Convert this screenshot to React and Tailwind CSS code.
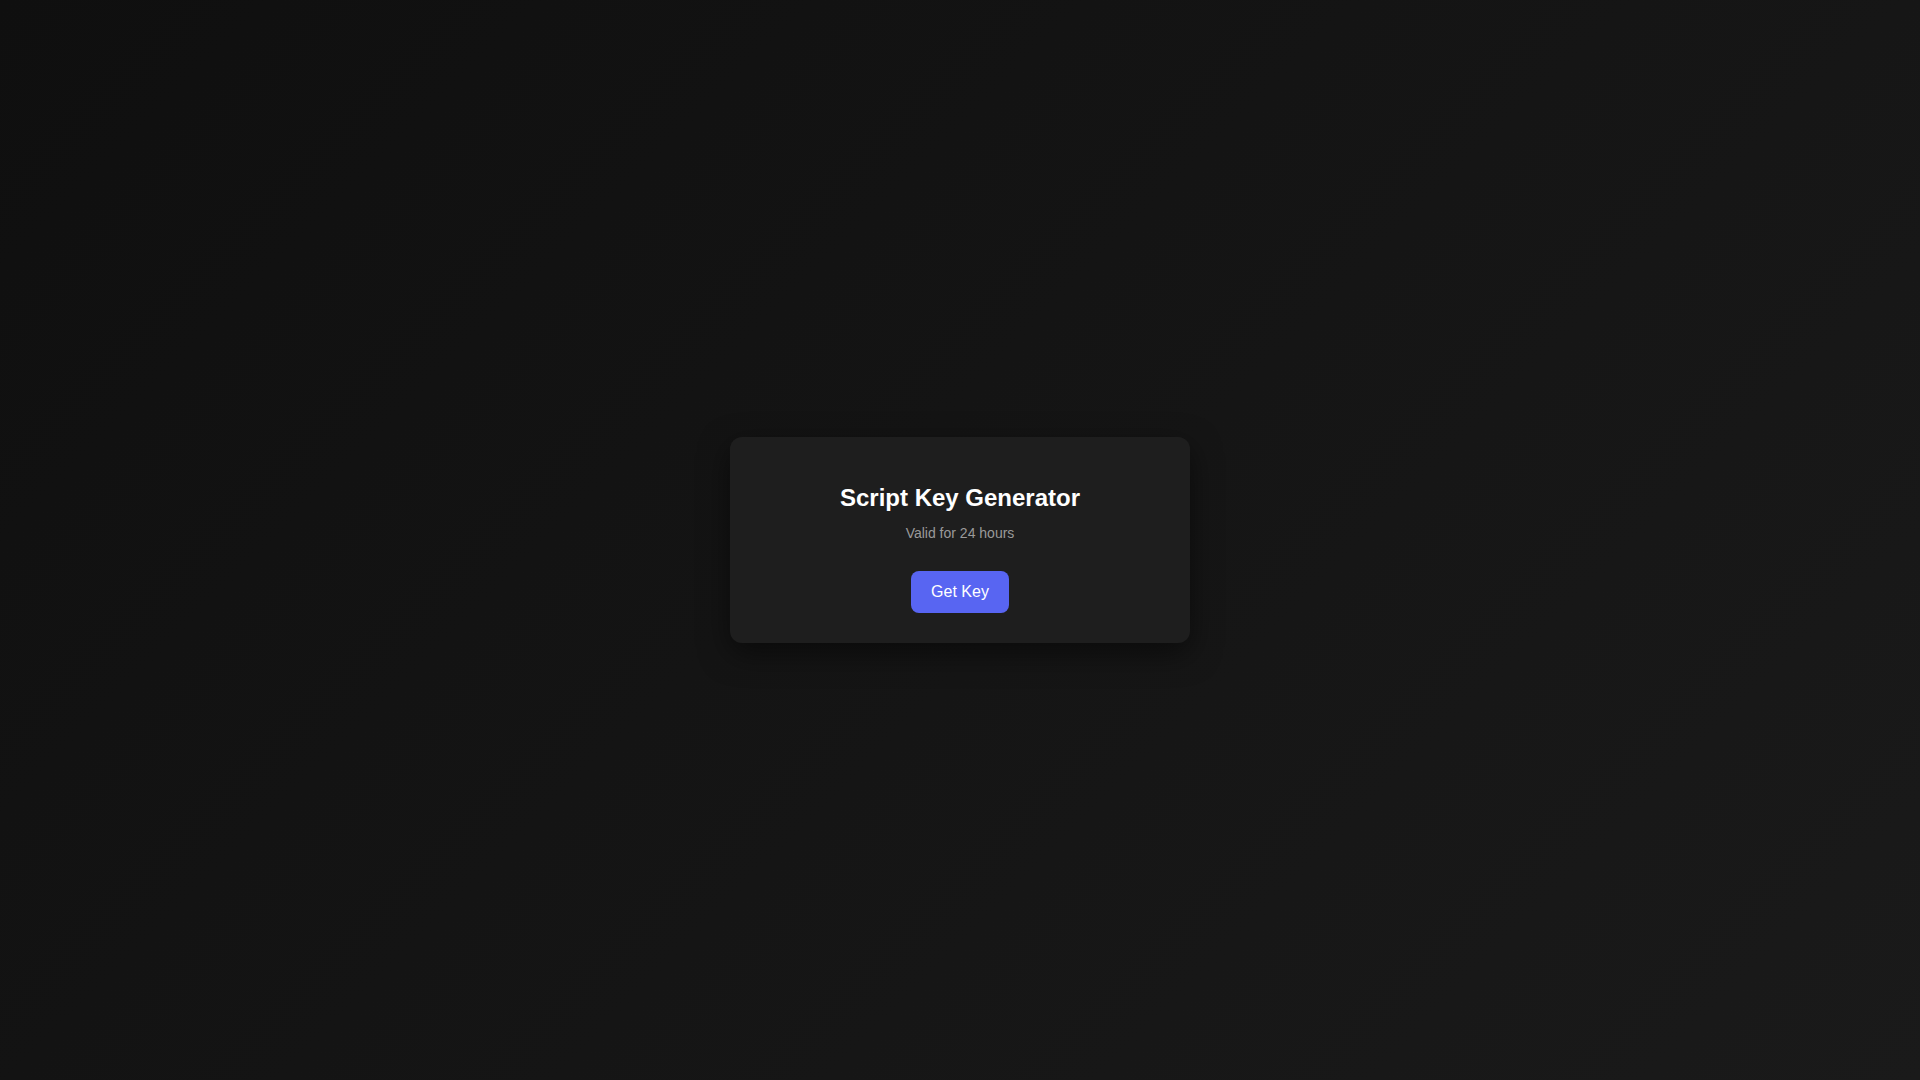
export default function App() {
  return (
    <div
      className="w-full h-screen flex items-center justify-center bg-[linear-gradient(135deg,#0f0f0f_0%,#1a1a1a_100%)]"
      style={{ fontFamily: '"Liberation Sans", Arial, sans-serif' }}
    >
      <div className="w-[460px] bg-[#1e1e1e] rounded-xl pt-[45px] pb-[30px] flex flex-col items-center shadow-[0_10px_30px_rgba(0,0,0,0.5)]">
        <h1 className="text-[24px] leading-[32px] font-bold text-white">Script Key Generator</h1>
        <p className="mt-[9px] text-[14px] leading-[20px] text-[#9a9a9a]">Valid for 24 hours</p>
        <button className="mt-[28px] h-[42px] px-5 rounded-lg bg-[#5865f2] text-white text-[16px] leading-[24px]">
          Get Key
        </button>
      </div>
    </div>
  );
}
